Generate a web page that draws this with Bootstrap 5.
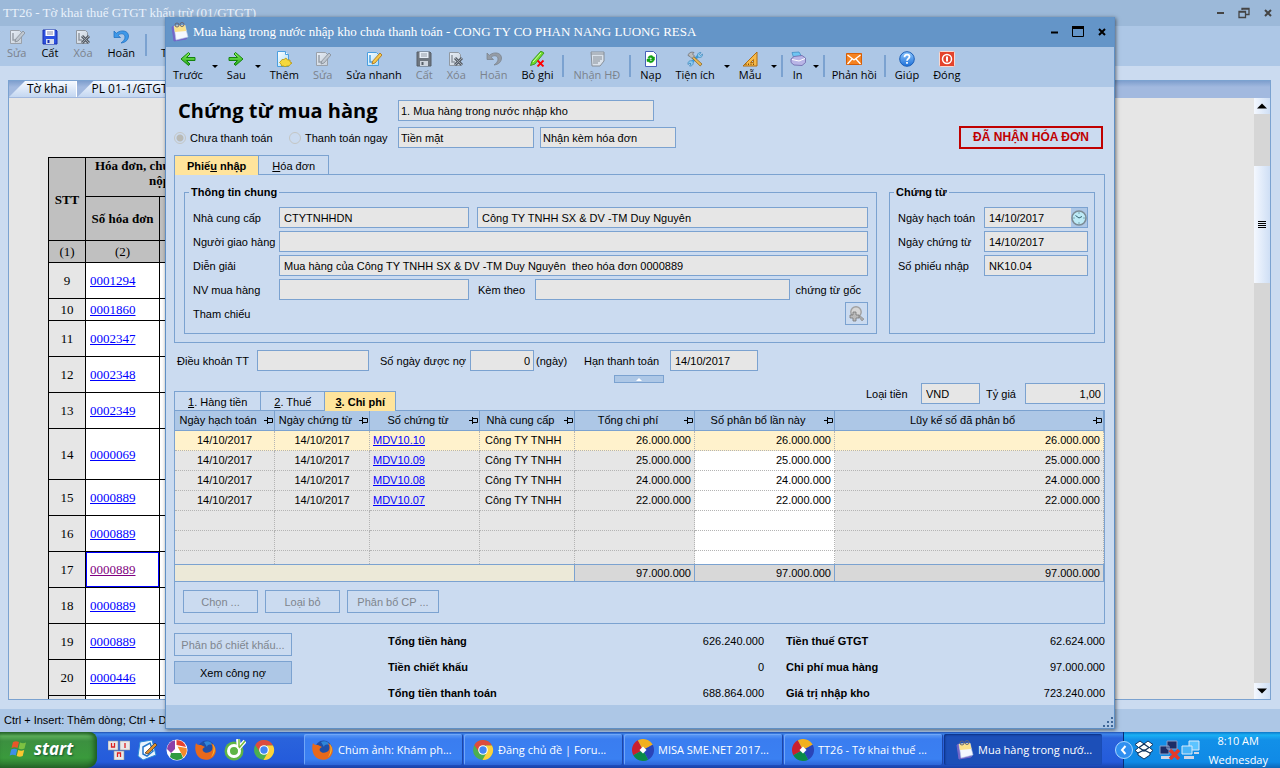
<!DOCTYPE html>
<html lang="vi">
<head>
<meta charset="utf-8">
<meta name="viewport" content="width=device-width, initial-scale=1">
<title>Mua hàng trong nước nhập kho chưa thanh toán</title>
<link href="https://cdn.jsdelivr.net/npm/bootstrap@5.3.0/dist/css/bootstrap.min.css" rel="stylesheet">
<script src="https://cdn.jsdelivr.net/npm/bootstrap@5.3.0/dist/js/bootstrap.bundle.min.js" defer></script>
<style>
  :root {
    --face: #cbdbf0; --bar: #adc7e6; --line: #7ba2d0; --field: #e6e6e6;
    --ui: "Liberation Sans", Arial, sans-serif;
    --tool: "Open Sans", Tahoma, sans-serif;
    --serif: "Liberation Serif", "Times New Roman", serif;
  }
  body { font: 11px/16px var(--ui); color: #000; background: var(--face); overflow: hidden; }
  button { font: inherit; color: inherit; background: none; border: 0; padding: 0; }
  svg { display: block; flex: none; }
  label, .lbl { white-space: nowrap; flex: none; }

  /* toolbars */
  .toolstrip { height: 40px; flex: none; background: var(--bar); font: 11px/16px var(--tool); white-space: nowrap; }
  .toolstrip button { display: flex; flex-direction: column; align-items: center; padding: 4px 7px 0; }
  .toolstrip .tight { padding-left: 5px; padding-right: 5px; }
  .toolstrip button:disabled { color: #7b828c; }
  .toolstrip button:disabled svg { filter: grayscale(1); opacity: .7; }
  .toolstrip .drop { width: 10px; padding: 18px 2px 0; }
  .rear-tools { gap: 1px; }
  .rear-tools button { padding-top: 3px; }
  .drop::after { content: ""; border: 3px solid transparent; border-top-color: #000; border-bottom: 0; }
  .splitter { width: 2px; height: 22px; margin: 8px 2px 0; background: var(--line); }
  .caption button { width: 16px; height: 16px; display: grid; place-items: center; }

  /* window behind */
  .rear-title { height: 26px; flex: none; background: #9cb9d9; color: #e9f1fb; font: 13px/18px var(--serif); padding: 0 4px 0 3px; }
  .rear-panel { margin: 14px 9px 9px 8px; border: 1px solid var(--line); background: var(--field); flex: 1 1 0; min-height: 0; }
  .rear-tabs { height: 17px; flex: none; background: linear-gradient(#7f9fce, #a2b9df 6px); font: 12px/16px var(--tool); }
  .rear-tabs button { height: 16px; padding: 0 9px 0 18px; border-right: 1px solid #fff; background: linear-gradient(#f5f9ff, #c4d7f1); clip-path: polygon(16px 0, 100% 0, 100% 100%, 0 100%); white-space: nowrap; }
  .rear-tabs button + button { padding-left: 14px; }
  .rear-status { height: 23px; flex: none; background: var(--bar); line-height: 23px; padding-left: 4px; }
  .sheet-area { padding: 59px 0 0 39px; overflow: hidden; min-width: 0; }
  .sheet { border-collapse: collapse; table-layout: fixed; width: 142px; font: 13px/15px var(--serif); }
  .sheet th, .sheet td { border: 1px solid #000; text-align: center; padding: 0; }
  .sheet thead th { background: #c0c0c0; white-space: nowrap; }
  .sheet thead .num { font-weight: 400; }
  .sheet thead .spread { text-align: left; padding: 0 0 8px 9px; }
  .spread span { padding-left: 54px; }
  .sheet tbody tr { height: 36px; }
  .sheet tbody td { background: #fff; text-align: left; padding-left: 4px; }
  .sheet tbody th { font-weight: 400; background: var(--field); }
  .sheet a { color: #00f; }
  .sheet a.seen { color: #800080; }
  .sheet td.active-cell { box-shadow: inset 0 0 0 1px #00f; }
  .vscroll { width: 16px; background: #d6d6d6; }
  .vscroll button { height: 16px; display: grid; place-items: center; background: linear-gradient(90deg, #f4f8ff, #cfdff5); }
  .vscroll .thumb { height: 117px; background: linear-gradient(90deg, #f4f8ff, #cfdff5); display: grid; place-items: center; margin-top: 52px; }

  /* purchase dialog */
  .dialog-win { position: absolute; left: 165px; right: 165px; top: 17px; border: 1px solid #5f8fc4; border-top: 0; background: var(--face); box-shadow: 1px 1px 4px #0008; }
  .dialog-title { height: 30px; background: #6495c8; color: #fff; font: 13px/18px var(--serif); padding: 0 4px 0 5px; }
  .dialog-body { padding: 0 9px 0 8px; }
  h1 { font: 700 20px/26px var(--tool); margin: 0; padding-left: 4px; width: 224px; }
  .box { font: inherit; height: 21px; border: 1px solid var(--line); border-radius: 0; background: var(--field); color: #000; padding: 0 4px; min-width: 0; appearance: none; }
  select.box { padding-left: 2px; opacity: 1; }
  .num-box { text-align: right; padding-right: 3px; }
  .w-type { width: 256px; } .w-pay { width: 136px; } .w-code { width: 190px; }
  .w-date { width: 104px; } .w-term { width: 112px; } .w-days { width: 64px; }
  .w-due { width: 88px; } .w-cur { width: 59px; } .w-rate { width: 80px; }
  .radio-pick input { appearance: none; width: 12px; height: 12px; border: 1px solid #c4c6c4; border-radius: 50%; margin: 0; }
  .radio-pick input:checked { background: radial-gradient(#b9bab6 3px, transparent 4px); }
  .stamp { border: 2px solid #c00000; color: #c00000; font-weight: 700; font-size: 12px; line-height: 19px; width: 144px; text-align: center; margin-right: 2px; }
  .tabset { margin-bottom: -1px; position: relative; }
  .tabset.first { padding-top: 6px; }
  .tabset button { height: 20px; border: 1px solid var(--line); border-bottom: 0; padding: 0 13px; margin-right: -1px; }
  .tabset button.on { background: #ffe49c; font-weight: 700; padding: 0 10px; }
  .tabset.first button.on { padding: 0 12px; }
  .framed { border: 1px solid var(--line); }
  .group { border: 1px solid var(--line); padding: 7px 8px 6px; height: 150px; }
  .group.slim { padding-right: 6px; }
  .group legend { float: none; width: auto; font: 700 11px/16px var(--ui); margin: 0 0 0 -4px; padding: 0 2px; }
  .fields { display: grid; row-gap: 3px; align-items: center; }
  .fields > div { display: flex; align-items: center; height: 21px; }
  .fields label, .fields .lbl { width: 86px; }
  .fields .lbl-att { width: 66px; padding-left: 9px; }
  .fields .lbl-auto { width: auto; padding: 0 7px 0 6px; }
  .clock-btn { width: 22px; background: var(--bar); border: 1px solid var(--line); border-left: 0; display: grid; place-items: center; }
  .ref-btn { width: 23px; height: 23px; border: 1px solid var(--line); display: grid; place-items: center; }
  .fold-btn { width: 50px; height: 8px; border: 1px solid var(--line); background: var(--bar); display: grid; place-items: center; margin: 4px 0 8px 440px; }
  .flat-btn { height: 23px; border: 1px solid var(--line); color: #000; }
  .flat-btn:disabled { color: #7e858e; }
  .w-act { width: 75px; } .w-split { width: 92px; } .w-side { width: 118px; }

  .cost-grid { width: 100%; table-layout: fixed; border-collapse: separate; border-spacing: 0; line-height: 19px; white-space: nowrap; }
  .cost-grid th { font-weight: 400; background: var(--bar); height: 20px; text-align: center; padding: 0 13px 0 0; border: solid var(--line); border-width: 0 1px 1px 0; position: relative; }
  .cost-grid th svg { position: absolute; right: 1px; top: 5px; }
  .cost-grid tbody td { height: 20px; padding: 0 3px; background: var(--field); border: dotted #b4b4b4; border-width: 0 1px 1px 0; text-align: right; }
  .cost-grid tbody .cut td { height: 13px; border-bottom: 0; }
  .cost-grid tbody td:nth-child(-n+2) { text-align: center; }
  .cost-grid tbody td:nth-child(3) { text-align: left; }
  .cost-grid tbody td:nth-child(4) { text-align: left; padding-left: 5px; overflow: hidden; }
  .cost-grid tbody td:nth-child(6) { background: #fff; }
  .cost-grid tbody tr.picked td { background: #fff2cc; }
  .cost-grid a { color: #00f; }
  .cost-grid tfoot td { height: 18px; line-height: 16px; background: #d8d8d8; border: solid var(--line); border-width: 1px 1px 1px 0; text-align: right; padding: 0 3px; }
  .cost-grid tfoot td:first-child { background: #ece9d8; }

  .totals { display: grid; grid-template-columns: 1fr auto; row-gap: 10px; align-content: start; margin: 1px 0 0; }
  .totals dt { font-weight: 700; } .totals dd { margin: 0; }
  .dialog-foot { height: 23px; background: var(--bar); }

  /* taskbar */
  .taskbar { height: 36px; flex: none; background: linear-gradient(#1f4fb0, #3e86ea 2px, #2a63dc 6px, #245bdb 30px, #1941a5); color: #fff; font: 11px/16px var(--tool); z-index: 2; position: relative; }
  .start-btn { width: 97px; background: linear-gradient(#2e6f31, #5cae5a 4px, #3c9040 9px, #3a9a3c 26px, #286b2b); border-radius: 0 8px 10px 0; box-shadow: inset -3px 0 5px #1d5a20; font: italic 700 17px/30px var(--tool); color: #fff; text-shadow: 1px 1px 2px #153; padding: 0 0 2px 9px; gap: 5px; }
  .quick { padding-left: 11px; gap: 7px; width: 207px; }
  .tasks { padding: 2px 0 3px; gap: 2px; }
  .tasks button { flex: 0 1 158px; min-width: 0; background: linear-gradient(#5e9cf5, #3a7df0 5px, #3a80f2 25px, #2d66d8); border-radius: 2px; padding: 0 8px; display: flex; align-items: center; gap: 4px; white-space: nowrap; box-shadow: inset 1px 1px 0 #70a6f8, 1px 0 0 #1d48a8; }
  .tasks button.on { background: #1c4fb8; box-shadow: inset 1px 1px 2px #0b2f80; padding-left: 12px; }
  .tray { width: 157px; background: linear-gradient(#0d77c8, #1ab0f4 3px, #1290e8 8px, #108ae6 30px, #0c66b8); border-left: 1px solid #092e77; padding-right: 12px; line-height: 19px; }
  .tray-toggle { margin-left: -9px; }
</style>
</head>
<body class="vh-100 d-flex flex-column">

<svg width="0" height="0" class="position-absolute" aria-hidden="true">
  <defs>
    <linearGradient id="gGreen" x2="0" y2="1"><stop stop-color="#8af05a"/><stop offset="1" stop-color="#1fa51a"/></linearGradient>
    <linearGradient id="gPage" x2="1" y2="1"><stop stop-color="#fff"/><stop offset="1" stop-color="#a9dcf7"/></linearGradient>
    <linearGradient id="gBlue" x2="0" y2="1"><stop stop-color="#8ec8ff"/><stop offset="1" stop-color="#1c6fd8"/></linearGradient>
    <symbol id="i-back" viewBox="0 0 16 16"><path d="M8.500 1.500 1 8l7.500 6.500 1.500-1.500-3.500-3.500H15V6.500H6.500L10 3z" fill="url(#gGreen)" stroke="#14830f"/></symbol>
    <symbol id="i-next" viewBox="0 0 16 16"><path d="M7.500 1.500 15 8l-7.500 6.500L6 13l3.500-3.500H1V6.500h8.500L6 3z" fill="url(#gGreen)" stroke="#14830f"/></symbol>
    <symbol id="i-new" viewBox="0 0 16 16"><path d="M1.500.500h8l3 3v12h-11z" fill="url(#gPage)" stroke="#4a9fe0"/><path d="M9.500.500v3h3" fill="#fff" stroke="#4a9fe0"/><path d="M10 7l1.500 2H14v2l2 1-2 1.500L13 15h-2l-2 .700L7.500 15H5.500l-.500-2-1.500-1.500L5 10l1-1.500h2z" fill="#f5d83c" stroke="#b8960c" stroke-width=".8"/></symbol>
    <symbol id="i-edit" viewBox="0 0 16 16"><path d="M1.500 1.500h9l2 2v11h-11z" fill="url(#gPage)" stroke="#4a9fe0"/><path d="M4 4v7h4" fill="none" stroke="#4a9fe0" stroke-width="1.500"/><path d="M14 2l2 2-7 8-3 1 .800-3z" fill="#f7c84a" stroke="#a86c10" stroke-width=".8"/></symbol>
    <symbol id="i-save" viewBox="0 0 16 16"><path d="M1 1h13l1 1v13H1z" fill="#2d52e0" stroke="#1a2fae"/><path d="M3.500 1h9v6h-9z" fill="#fff"/><path d="M5 3h6M5 5h6" stroke="#88a"/><path d="M4 10h8v5H4z" fill="#d5dcec"/><path d="M5.500 11h2v3h-2z" fill="#1a2fae"/></symbol>
    <symbol id="i-del" viewBox="0 0 16 16"><path d="M1.500 1.500h9l2 2v11h-11z" fill="url(#gPage)" stroke="#6c8aa5"/><path d="M4 4v7h3" fill="none" stroke="#6c8aa5" stroke-width="1.500"/><path d="M7 7l7 7m0-7l-7 7" stroke="#333" stroke-width="3"/><path d="M7 7l7 7m0-7l-7 7" stroke="#999"/></symbol>
    <symbol id="i-undo" viewBox="0 0 16 16"><path d="M1 2v6.500h6.500L5 6.300C7.500 3.800 12 4.500 12 8c0 2.500-1.500 4-4 6 5-.5 7.500-3.500 7.500-7C15.500 1.500 8 .200 3.300 4.300z" fill="#3e98e8" stroke="#1b6bbd" stroke-width=".7"/></symbol>
    <symbol id="i-unpost" viewBox="0 0 16 16"><path d="M12 0l3 2-9 11-4.500 1.500L3 10z" fill="#6fdc2c" stroke="#2f8e12" stroke-width=".8"/><path d="M12 2l-8 9" stroke="#d6ffb0"/><path d="M8.500 9.500l6 6m0-6l-6 6" stroke="#f00" stroke-width="1.800"/></symbol>
    <symbol id="i-receipt" viewBox="0 0 16 16"><path d="M2 1h13v9l-4 5H3z" fill="#eee" stroke="#777"/><path d="M2 3h13M4 6h9M4 8h9M4 10h7M4 12h5" stroke="#777"/></symbol>
    <symbol id="i-reload" viewBox="0 0 16 16"><path d="M2.500.500h8l3 3v12h-11z" fill="#fff" stroke="#4660b8"/><path d="M5 7c.500-3 5-3 5-1h1.500v3H8l1-1.500C8 6 6.500 6.500 6.500 7.500zM11 9c-.500 3-5 3.500-5.500 1.500H4V8h3.500l-.700 1.500C8 10.500 9.200 10 9.500 9z" fill="#12a012" stroke="#12a012" stroke-width=".5"/></symbol>
    <symbol id="i-tools" viewBox="0 0 16 16"><path d="M3 13L12 4" stroke="#3d9ad8" stroke-width="2.500"/><path d="M11 6c-1.500-2.500.5-5 3-4.500L12.500 3.500l1 1L15.500 3c.500 2.500-2 4.500-4.500 3M5 10c-2.500-1-4.500 1-4 3.500L3 12l1 1-1.500 2C5 15.500 7 13 6 11" fill="#8ccaf0" stroke="#3d86b8" stroke-width=".7"/><path d="M6 5l9 8-1.800 2L5 7z" fill="#e9b854" stroke="#8b6a2c" stroke-width=".8"/><path d="M1 4.500C1.500 2 4 .500 7 1.500L5.500 3 7.500 5 5 7.500 3 5.500z" fill="#bbb" stroke="#666" stroke-width=".7"/></symbol>
    <symbol id="i-ruler" viewBox="0 0 16 16"><path d="M15 1v14H1z" fill="#f6b94a" stroke="#b06d10"/><path d="M11.500 8.500v3h-3z" fill="#adc7e6" stroke="#b06d10"/><path d="M4 14v-1.500M6.500 14v-1.500M9 14v-1.500M11.500 14v-1.500" stroke="#7a4a08"/></symbol>
    <symbol id="i-print" viewBox="0 0 16 16"><path d="M2 1.500l7-.500 3 5-8 2z" fill="#6fc5f2" stroke="#3a88c0" stroke-width=".7"/><path d="M1 8l3-2.500 8-1L15.500 7v4.500L12 14.500 4 14l-3-2.500z" fill="#b9b5e6" stroke="#6c66a8" stroke-width=".8"/><path d="M2 8.500l7 1.500 6-2.500" stroke="#fff" fill="none"/></symbol>
    <symbol id="i-mail" viewBox="0 0 16 16"><path d="M.500 2.500h15v11H.500z" fill="#f58220" stroke="#d65e06"/><path d="M1.500 4L8 9l6.500-5M1.500 13l4.500-5M14.500 13L10 8" fill="none" stroke="#fff" stroke-width="1.300"/></symbol>
    <symbol id="i-help" viewBox="0 0 16 16"><circle cx="8" cy="8" r="7.300" fill="url(#gBlue)" stroke="#1b5fb8"/><path d="M5.500 6.200c0-3.600 5-3.200 5-.4C10.500 7.500 8 7.700 8 9.700M8 11v1.800" fill="none" stroke="#fff" stroke-width="1.800"/></symbol>
    <symbol id="i-power" viewBox="0 0 16 16"><rect x=".5" y=".5" width="15" height="15" rx="1" fill="#e4432c" stroke="#f8d8d0"/><circle cx="8" cy="8" r="4.500" fill="none" stroke="#fff" stroke-width="1.500"/><path d="M8 5.500v5" stroke="#fff" stroke-width="2"/></symbol>
    <symbol id="i-note" viewBox="0 0 18 20"><path d="M1 5l2 14 12-2 1-1L5 17 3 4z" fill="#7366c8" stroke="#7366c8"/><path d="M3 4l11-1 3 12-12 3z" fill="#f4f8ff" stroke="#b9c9e8" stroke-width=".6"/><path d="M3 4l11-1 1.300 6L4 10z" fill="#fbe28a"/><circle cx="6" cy="3" r="2" fill="none" stroke="#667"/><circle cx="11" cy="2.500" r="2" fill="none" stroke="#667"/></symbol>
    <symbol id="i-pin" viewBox="0 0 9 9"><path d="M0 4.500h3M3.500 1v7M4 2.500h4.500v4H4" fill="none" stroke="#000"/></symbol>
    <symbol id="i-clock" viewBox="0 0 16 16"><circle cx="8" cy="8" r="7" fill="#bdeaf6" stroke="#7c8c96" stroke-width="1.600"/><path d="M4.500 5.500L8 8l3-1.500" fill="none" stroke="#35636f"/><path d="M8 2.500v1M8 12.500v1M2.500 8h1M12.500 8h1" stroke="#35636f"/></symbol>
    <symbol id="i-zoomadd" viewBox="0 0 16 16"><path d="M10 9l5 4-2 2-4-5z" fill="#aaa" stroke="#888" stroke-width=".6"/><circle cx="7" cy="6" r="5.200" fill="#d6d6d6" stroke="#a0a0a0" stroke-width="1.400"/><path d="M4 6h3v3h3v3H7v3H4v-3H1V9h3z" fill="#bbb" stroke="#777" stroke-width=".8"/></symbol>
    <symbol id="i-firefox" viewBox="0 0 22 22"><circle cx="11.500" cy="10" r="8.500" fill="#1f4fa8"/><path d="M9 3c4-2 8 0 8 3-3-1-5 0-5 2z" fill="#2f86d8"/><path d="M1 4c1 2 3 2 5 2l4 2c-2 1-3 2-2 4 2 3 7 2 9-1 1-3 0-5-1-7 4 2 6 7 4 11-2 5-8 7-13 5C1 18-1 10 1 4z" fill="#e8691b"/><path d="M18 5c3 4 2 10-2 13 3-4 3-9 2-13z" fill="#fbc02d"/></symbol>
    <symbol id="i-chrome" viewBox="0 0 22 22"><circle cx="11" cy="11" r="10" fill="#4caf50"/><path d="M2.300 6A10 10 0 0 1 20 6.500H11L7 13z" fill="#dd4b3e"/><path d="M20 6.500A10 10 0 0 1 10.500 21L15 13l-1-6.500z" fill="#fdd23b"/><circle cx="11" cy="11" r="4.800" fill="#fff"/><circle cx="11" cy="11" r="3.700" fill="#4285f4"/></symbol>
    <symbol id="i-misa" viewBox="0 0 22 22"><g transform="rotate(-28 11 11)"><path d="M11 11V0A11 11 0 0 0 0 11z" fill="#c9202f"/><path d="M11 11V0a11 11 0 0 1 11 11z" fill="#f2b01e"/><path d="M11 11h11a11 11 0 0 1-11 11z" fill="#2a44b8"/><path d="M11 11v11A11 11 0 0 1 0 11z" fill="#0a8a4a"/></g><path d="M11 7.500l3.500 3.500-3.500 3.500L7.500 11z" fill="#fff"/></symbol>
  </defs>
</svg>

<main class="flex-fill position-relative d-flex flex-column" style="min-height:0">

  <!-- tax declaration window -->
  <header class="rear-title caption d-flex align-items-center">
    <span class="text-nowrap me-auto">TT26 - Tờ khai thuế GTGT khấu trừ (01/GTGT)</span>
    <div class="d-flex gap-2">
      <button aria-label="Thu nhỏ"><svg width="12" height="12"><path d="M3 6h7" stroke="#444" stroke-width="2"/></svg></button>
      <button aria-label="Khôi phục"><svg width="12" height="12"><path d="M4 3V1.500h7v6H8M4 2h7M1 4.500h6.500v6H1zM1 5h7" fill="none" stroke="#444" stroke-width="1.300"/></svg></button>
      <button aria-label="Đóng cửa sổ"><svg width="12" height="12"><path d="M3 3l6 6m0-6L3 9" stroke="#444" stroke-width="2"/></svg></button>
    </div>
  </header>
  <nav class="toolstrip rear-tools d-flex" aria-label="Công cụ tờ khai">
    <button disabled><svg width="16" height="16"><use href="#i-edit"/></svg>Sửa</button>
    <button><svg width="16" height="16"><use href="#i-save"/></svg>Cất</button>
    <button disabled><svg width="16" height="16"><use href="#i-del"/></svg>Xóa</button>
    <button><svg width="16" height="16"><use href="#i-undo"/></svg>Hoãn</button>
    <span class="splitter"></span>
    <button class="ms-1"><svg width="16" height="16"><use href="#i-new"/></svg>Thêm</button>
  </nav>
  <section class="rear-panel d-flex flex-column">
    <div class="rear-tabs d-flex"><button>Tờ khai</button><button>PL 01-1/GTGT</button></div>
    <div class="d-flex flex-fill" style="min-height:0">
      <div class="sheet-area flex-fill">
        <table class="sheet">
          <colgroup><col style="width:37px"><col style="width:74px"><col></colgroup>
          <thead>
            <tr style="height:38px"><th rowspan="2">STT</th><th colspan="2" class="spread">Hóa đơn, chứ<br><span>nộp</span></th></tr>
            <tr style="height:44px"><th>Số hóa đơn</th><th></th></tr>
            <tr style="height:22px"><th class="num">(1)</th><th class="num">(2)</th><th></th></tr>
          </thead>
          <tbody>
            <tr><th>9</th><td><a href="#">0001294</a></td><td></td></tr>
            <tr style="height:22px"><th>10</th><td><a href="#">0001860</a></td><td></td></tr>
            <tr><th>11</th><td><a href="#">0002347</a></td><td></td></tr>
            <tr><th>12</th><td><a href="#">0002348</a></td><td></td></tr>
            <tr><th>13</th><td><a href="#">0002349</a></td><td></td></tr>
            <tr style="height:51px"><th>14</th><td><a href="#">0000069</a></td><td></td></tr>
            <tr><th>15</th><td><a href="#">0000889</a></td><td></td></tr>
            <tr><th>16</th><td><a href="#">0000889</a></td><td></td></tr>
            <tr><th>17</th><td class="active-cell"><a href="#" class="seen">0000889</a></td><td></td></tr>
            <tr><th>18</th><td><a href="#">0000889</a></td><td></td></tr>
            <tr><th>19</th><td><a href="#">0000889</a></td><td></td></tr>
            <tr><th>20</th><td><a href="#">0000446</a></td><td></td></tr>
            <tr><th></th><td></td><td></td></tr>
          </tbody>
        </table>
      </div>
      <div class="vscroll d-flex flex-column">
        <button aria-label="Cuộn lên"><svg width="10" height="6"><path d="M0 5.500L5 .500l5 5z"/></svg></button>
        <div class="thumb"><svg width="8" height="8"><path d="M0 .500h8M0 2.500h8M0 4.500h8M0 6.500h8" stroke="#000"/></svg></div>
        <button class="mt-auto" aria-label="Cuộn xuống"><svg width="10" height="6"><path d="M0 .500h10L5 5.500z"/></svg></button>
      </div>
    </div>
  </section>
  <footer class="rear-status">Ctrl + Insert: Thêm dòng; Ctrl + Delete: Xóa dòng</footer>

  <!-- purchase dialog -->
  <div class="dialog-win" role="dialog" aria-label="Chứng từ mua hàng">
    <header class="dialog-title caption d-flex align-items-center">
      <svg width="18" height="20"><use href="#i-note"/></svg>
      <span class="text-nowrap me-auto ps-1">Mua hàng trong nước nhập kho chưa thanh toán - CONG TY CO PHAN NANG LUONG RESA</span>
      <div class="d-flex gap-2">
        <button aria-label="Thu nhỏ"><svg width="12" height="12"><path d="M3 6.500h7" stroke="#000" stroke-width="2"/></svg></button>
        <button aria-label="Phóng to"><svg width="12" height="12"><path d="M.500 1v9.500h11V1M0 2h12" fill="none" stroke="#000"/><path d="M0 1.500h12" stroke="#000" stroke-width="3"/></svg></button>
        <button aria-label="Đóng cửa sổ"><svg width="12" height="12"><path d="M3 3l6 6m0-6L3 9" stroke="#000" stroke-width="2"/></svg></button>
      </div>
    </header>
    <nav class="toolstrip d-flex" aria-label="Công cụ chứng từ">
      <button><svg width="16" height="16"><use href="#i-back"/></svg>Trước</button><button class="drop" aria-label="Thêm lựa chọn"></button>
      <button><svg width="16" height="16"><use href="#i-next"/></svg>Sau</button><button class="drop" aria-label="Thêm lựa chọn"></button>
      <button><svg width="16" height="16"><use href="#i-new"/></svg>Thêm</button>
      <button disabled><svg width="16" height="16"><use href="#i-edit"/></svg>Sửa</button>
      <button><svg width="16" height="16"><use href="#i-edit"/></svg>Sửa nhanh</button>
      <button disabled><svg width="16" height="16"><use href="#i-save"/></svg>Cất</button>
      <button disabled><svg width="16" height="16"><use href="#i-del"/></svg>Xóa</button>
      <button disabled><svg width="16" height="16"><use href="#i-undo"/></svg>Hoãn</button>
      <button><svg width="16" height="16"><use href="#i-unpost"/></svg>Bỏ ghi</button>
      <span class="splitter"></span>
      <button disabled><svg width="16" height="16"><use href="#i-receipt"/></svg>Nhận HĐ</button>
      <span class="splitter"></span>
      <button><svg width="16" height="16"><use href="#i-reload"/></svg>Nạp</button>
      <button><svg width="16" height="16"><use href="#i-tools"/></svg>Tiện ích</button><button class="drop" aria-label="Thêm lựa chọn"></button>
      <button><svg width="16" height="16"><use href="#i-ruler"/></svg>Mẫu</button><button class="drop" aria-label="Thêm lựa chọn"></button>
      <span class="splitter"></span>
      <button class="tight"><svg width="16" height="16"><use href="#i-print"/></svg>In</button><button class="drop" aria-label="Thêm lựa chọn"></button>
      <span class="splitter"></span>
      <button class="tight"><svg width="16" height="16"><use href="#i-mail"/></svg>Phản hồi</button>
      <span class="splitter"></span>
      <button><svg width="16" height="16"><use href="#i-help"/></svg>Giúp</button>
      <button><svg width="16" height="16"><use href="#i-power"/></svg>Đóng</button>
    </nav>

    <div class="dialog-body">
      <div class="d-flex align-items-center pt-2" style="height:39px">
        <h1>Chứng từ mua hàng</h1>
        <select class="box w-type" aria-label="Loại chứng từ"><option>1. Mua hàng trong nước nhập kho</option></select>
      </div>
      <div class="d-flex align-items-center">
        <div class="radio-pick d-flex" style="width:224px">
          <label class="d-flex align-items-center gap-1" style="width:115px"><input type="radio" name="pay" checked disabled>Chưa thanh toán</label>
          <label class="d-flex align-items-center gap-1"><input type="radio" name="pay" disabled>Thanh toán ngay</label>
        </div>
        <div class="d-flex" style="gap:6px">
          <select class="box w-pay" aria-label="Hình thức"><option>Tiền mặt</option></select>
          <select class="box w-pay" aria-label="Hóa đơn kèm"><option>Nhận kèm hóa đơn</option></select>
        </div>
        <div class="stamp ms-auto">ĐÃ NHẬN HÓA ĐƠN</div>
      </div>

      <div class="tabset first d-flex" role="tablist"><button class="on" role="tab">Phiế<u>u</u> nhập</button><button role="tab"><u>H</u>óa đơn</button></div>
      <div class="framed d-flex align-items-start" style="padding:9px;gap:12px;height:169px">
        <fieldset class="group flex-fill">
          <legend>Thông tin chung</legend>
          <div class="fields">
            <div><label for="sup">Nhà cung cấp</label><input id="sup" class="box w-code" value="CTYTNHHDN" readonly><input class="box flex-fill ms-2" aria-label="Tên nhà cung cấp" value="Công TY TNHH SX &amp; DV -TM Duy Nguyên" readonly></div>
            <div><label for="who">Người giao hàng</label><input id="who" class="box flex-fill" readonly></div>
            <div><label for="desc">Diễn giải</label><input id="desc" class="box flex-fill" value="Mua hàng của Công TY TNHH SX &amp; DV -TM Duy Nguyên  theo hóa đơn 0000889" readonly></div>
            <div><label for="emp">NV mua hàng</label><input id="emp" class="box w-code" readonly><label for="att" class="lbl-att">Kèm theo</label><input id="att" class="box flex-fill" readonly><span class="lbl lbl-auto">chứng từ gốc</span></div>
            <div><span class="lbl">Tham chiếu</span><button class="ref-btn ms-auto" aria-label="Chọn tham chiếu" disabled><svg width="16" height="16"><use href="#i-zoomadd"/></svg></button></div>
          </div>
        </fieldset>
        <fieldset class="group slim">
          <legend>Chứng từ</legend>
          <div class="fields">
            <div><label for="d1">Ngày hạch toán</label><div class="d-flex w-date"><input id="d1" class="box flex-fill border-end-0" value="14/10/2017" readonly><button class="clock-btn" aria-label="Chọn ngày"><svg width="16" height="16"><use href="#i-clock"/></svg></button></div></div>
            <div><label for="d2">Ngày chứng từ</label><input id="d2" class="box w-date" value="14/10/2017" readonly></div>
            <div><label for="no">Số phiếu nhập</label><input id="no" class="box w-date" value="NK10.04" readonly></div>
          </div>
        </fieldset>
      </div>

      <div class="d-flex align-items-center" style="padding:7px 0 0 3px">
        <label for="term" style="width:80px">Điều khoản TT</label><input id="term" class="box w-term" readonly>
        <label for="days" style="width:101px;padding-left:11px">Số ngày được nợ</label><input id="days" class="box num-box w-days" value="0" readonly><span class="lbl" style="width:50px;padding-left:2px">(ngày)</span>
        <label for="due" style="width:86px">Hạn thanh toán</label><input id="due" class="box w-due" value="14/10/2017" readonly>
      </div>
      <button class="fold-btn" aria-label="Thu gọn"><svg width="6" height="3"><path d="M0 3l3-3 3 3z" fill="#fff"/></svg></button>

      <div class="d-flex align-items-end tabset">
        <div class="d-flex me-auto" role="tablist"><button role="tab"><u>1</u>. Hàng tiền</button><button role="tab"><u>2</u>. Thuế</button><button class="on" role="tab"><u>3</u>. Chi phí</button></div>
        <div class="d-flex align-items-center" style="height:21px;margin-bottom:7px;margin-top:-8px"><label for="cur" style="width:55px">Loại tiền</label><input id="cur" class="box w-cur" value="VND" readonly><label for="rate" style="width:45px;padding-left:6px">Tỷ giá</label><input id="rate" class="box num-box w-rate" value="1,00" readonly></div>
      </div>
      <div class="framed" style="height:214px">
        <table class="cost-grid">
          <colgroup><col style="width:100px"><col style="width:95px"><col style="width:110px"><col style="width:95px"><col style="width:120px"><col style="width:140px"><col></colgroup>
          <thead><tr>
            <th>Ngày hạch toán<svg width="9" height="9"><use href="#i-pin"/></svg></th>
            <th>Ngày chứng từ<svg width="9" height="9"><use href="#i-pin"/></svg></th>
            <th>Số chứng từ<svg width="9" height="9"><use href="#i-pin"/></svg></th>
            <th>Nhà cung cấp<svg width="9" height="9"><use href="#i-pin"/></svg></th>
            <th>Tổng chi phí<svg width="9" height="9"><use href="#i-pin"/></svg></th>
            <th>Số phân bổ lần này<svg width="9" height="9"><use href="#i-pin"/></svg></th>
            <th>Lũy kế số đã phân bổ<svg width="9" height="9"><use href="#i-pin"/></svg></th>
          </tr></thead>
          <tbody>
            <tr class="picked"><td>14/10/2017</td><td>14/10/2017</td><td><a href="#">MDV10.10</a></td><td>Công TY TNHH</td><td>26.000.000</td><td>26.000.000</td><td>26.000.000</td></tr>
            <tr><td>14/10/2017</td><td>14/10/2017</td><td><a href="#">MDV10.09</a></td><td>Công TY TNHH</td><td>25.000.000</td><td>25.000.000</td><td>25.000.000</td></tr>
            <tr><td>14/10/2017</td><td>14/10/2017</td><td><a href="#">MDV10.08</a></td><td>Công TY TNHH</td><td>24.000.000</td><td>24.000.000</td><td>24.000.000</td></tr>
            <tr><td>14/10/2017</td><td>14/10/2017</td><td><a href="#">MDV10.07</a></td><td>Công TY TNHH</td><td>22.000.000</td><td>22.000.000</td><td>22.000.000</td></tr>
            <tr><td></td><td></td><td></td><td></td><td></td><td></td><td></td></tr>
            <tr><td></td><td></td><td></td><td></td><td></td><td></td><td></td></tr>
            <tr class="cut"><td></td><td></td><td></td><td></td><td></td><td></td><td></td></tr>
          </tbody>
          <tfoot><tr><td colspan="4"></td><td>97.000.000</td><td>97.000.000</td><td>97.000.000</td></tr></tfoot>
        </table>
        <div class="d-flex p-2" style="gap:7px">
          <button class="flat-btn w-act" disabled>Chọn ...</button><button class="flat-btn w-act" disabled>Loại bỏ</button><button class="flat-btn w-split" disabled>Phân bổ CP ...</button>
        </div>
      </div>

      <div class="d-flex pt-2" style="height:81px">
        <div class="d-flex flex-column" style="gap:5px;padding-top:1px;width:214px">
          <button class="flat-btn w-side" disabled>Phân bổ chiết khấu...</button>
          <button class="flat-btn w-side" style="background:var(--bar)">Xem công nợ</button>
        </div>
        <dl class="totals flex-fill" style="flex-basis:0"><dt>Tổng tiền hàng</dt><dd class="text-end">626.240.000</dd><dt>Tiền chiết khấu</dt><dd class="text-end">0</dd><dt>Tổng tiền thanh toán</dt><dd class="text-end">688.864.000</dd></dl>
        <dl class="totals" style="width:341px;padding-left:22px"><dt>Tiền thuế GTGT</dt><dd class="text-end">62.624.000</dd><dt>Chi phí mua hàng</dt><dd class="text-end">97.000.000</dd><dt>Giá trị nhập kho</dt><dd class="text-end">723.240.000</dd></dl>
      </div>
    </div>
    <footer class="dialog-foot d-flex justify-content-end align-items-end"><svg width="11" height="11"><path d="M8 0h2v2H8zM8 4h2v2H8zM8 8h2v2H8zM4 4h2v2H4zM4 8h2v2H4zM0 8h2v2H0z" fill="#3f6797"/></svg></footer>
  </div>
</main>

<!-- taskbar -->
<nav class="taskbar d-flex" aria-label="Thanh tác vụ">
  <button class="start-btn d-flex align-items-center flex-shrink-0">
    <svg width="20" height="20" viewBox="0 0 20 20"><path d="M4 3c2-1 4-1 6 0L8.500 9c-2-1-4-1-6 0z" fill="#e8562a"/><path d="M11 3.500c2 1 4 1 6 0l-1.500 6c-2 1-4 1-6 0z" fill="#7dc142"/><path d="M2.200 10.500c2-1 4-1 6 0L6.700 16.500c-2-1-4-1-6 0z" fill="#3f8fe8"/><path d="M9.200 11c2 1 4 1 6 0l-1.500 6c-2 1-4 1-6 0z" fill="#fbc730"/></svg>start
  </button>
  <div class="quick d-flex align-items-center flex-shrink-0">
    <a href="#" aria-label="UniKey"><svg width="22" height="20"><path d="M0 1h10v9H0zM12 1h10v9H12zM6 11h10v9H6z" fill="#e9e9e9" stroke="#999" stroke-width=".6"/><path d="M3.500 3v4h3V3M17 3v5M9.500 17v-4h3v4" fill="none" stroke="#d22" stroke-width="1.300"/></svg></a>
    <a href="#" aria-label="Màn hình nền"><svg width="22" height="22"><path d="M3 3l12-2 4 15-13 5-5-4z" fill="#e9f4fd" stroke="#2a8ad8"/><path d="M6 8l7-4 3 8-6 5-4-2z" fill="#fff" stroke="#2277c8" stroke-width="1.500"/><path d="M8 14l10-10 2 2-9 9z" fill="#e08e2a" stroke="#333" stroke-width=".7"/></svg></a>
    <a href="#" aria-label="Picasa"><svg width="22" height="22"><circle cx="11" cy="11" r="10.500" fill="#fff"/><path d="M9 1.200A10 10 0 0 0 1 10l4 4 4-4z" fill="#8d3fa8"/><path d="M10.500 1A10 10 0 0 1 20 8l-9.500-2z" fill="#e8432f"/><path d="M11.500 7.500L20.500 9a10 10 0 0 1-3 9.500z" fill="#f58a2a"/><path d="M5 14h10l2 5a10 10 0 0 1-13-1z" fill="#2f9a3f"/></svg></a>
    <a href="#" aria-label="Firefox"><svg width="22" height="22"><use href="#i-firefox"/></svg></a>
    <a href="#" aria-label="Cốc Cốc"><svg width="22" height="22"><circle cx="10" cy="12" r="9.500" fill="#5fb545"/><circle cx="10" cy="12" r="5.500" fill="none" stroke="#fff" stroke-width="3"/><path d="M14 0l1 9M21 2l-7 8" stroke="#fff" stroke-width="4"/><path d="M15 0v8M21 2l-6 7" stroke="#76bd3a" stroke-width="1.500"/></svg></a>
    <a href="#" aria-label="Chrome"><svg width="22" height="22"><use href="#i-chrome"/></svg></a>
  </div>
  <div class="tasks d-flex flex-fill">
    <button><svg width="22" height="22"><use href="#i-firefox"/></svg>Chùm ảnh: Khám ph...</button>
    <button><svg width="22" height="22"><use href="#i-chrome"/></svg>Đăng chủ đề | Foru...</button>
    <button><svg width="22" height="22"><use href="#i-misa"/></svg>MISA SME.NET 2017...</button>
    <button><svg width="22" height="22"><use href="#i-misa"/></svg>TT26 - Tờ khai thuế ...</button>
    <button class="on"><svg width="18" height="20"><use href="#i-note"/></svg>Mua hàng trong nướ...</button>
  </div>
  <div class="tray d-flex align-items-center flex-shrink-0">
    <button class="tray-toggle" aria-label="Hiện biểu tượng ẩn"><svg width="18" height="18"><circle cx="9" cy="9" r="8.500" fill="#2f8ff0" stroke="#a9d6ff"/><path d="M10.500 5L7 9l3.500 4" fill="none" stroke="#fff" stroke-width="2"/></svg></button>
    <svg width="22" height="20" viewBox="0 0 20 20"><path d="M6 1l4 3 4-3 5 3.500-3.500 3 3.500 3-3 2.500v2L10 19l-6-4v-2l-3-2.500 3.500-3L1 4.500z" fill="#fff" stroke="#12345c"/><path d="M10 4L5 7.500l5 3.500 5-3.500zM4 13l2-1 4-2 4 2 2 1" fill="none" stroke="#12345c" stroke-width="1.300"/></svg>
    <svg class="ms-1" width="22" height="20"><path d="M8 1h10v8H8zM1 6h9v8H1z" fill="#1d2d66" stroke="#8ba0c8"/><path d="M2 16h9v3H2z" fill="#cfd6e6"/><path d="M11 10l9 9m0-9l-9 9" stroke="#e43a2a" stroke-width="3.500"/></svg>
    <svg width="20" height="20"><path d="M8 1h10v9H8z" fill="#5cc4ff" stroke="#dceaf8"/><path d="M1 6h10v8H1z" fill="#49b4f8" stroke="#dceaf8"/><path d="M3 16h10v3H3zM13 12h5v2h-5z" fill="#cfd6e6"/></svg>
    <div class="ms-auto text-center">8:10 AM<br>Wednesday</div>
  </div>
</nav>
</body>
</html>
